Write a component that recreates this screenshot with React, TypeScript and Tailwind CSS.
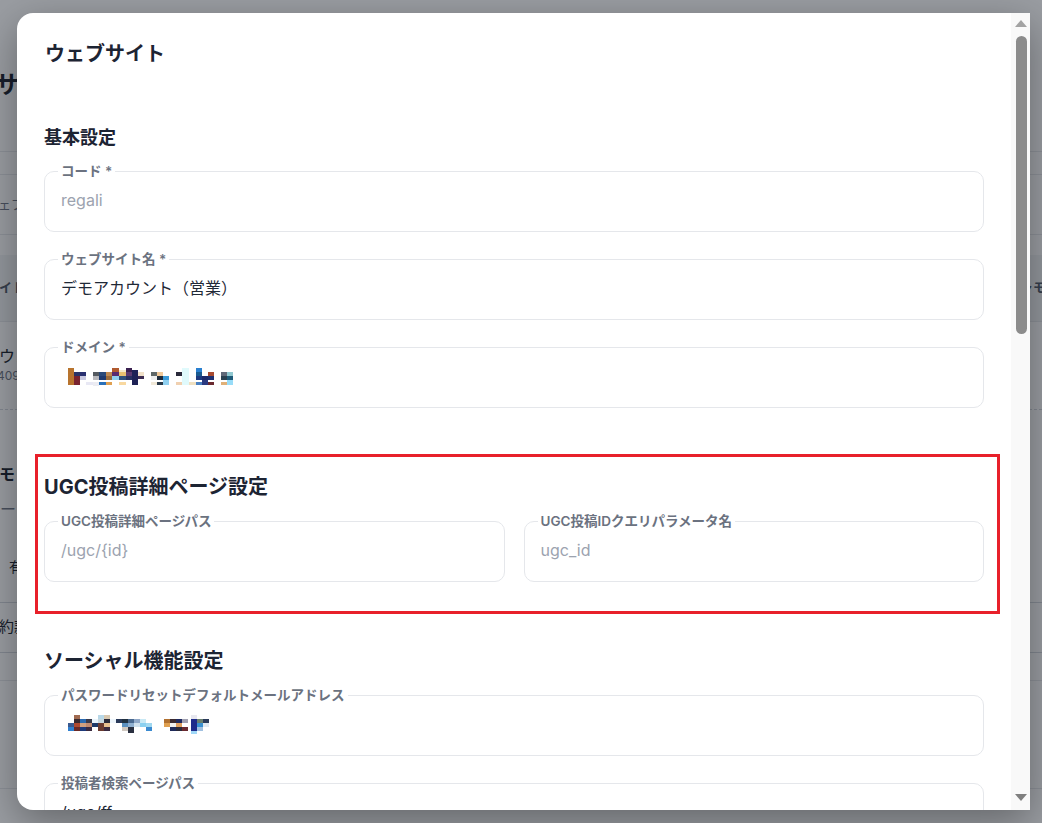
import React from "react";

type Cell = [number, number, number, number, string];

const font = "font-['Inter','Noto_Sans_CJK_JP',sans-serif]";

// blurred-out values (domain / mail address)
const domainCells: Cell[] = [
  [0, 1, 6, 17, "#b8742e"],
  [6, 5, 6, 4, "#2a3468"], [6, 9, 6, 9, "#7a2430"],
  [12, 5, 6, 4, "#283070"], [12, 9, 6, 4, "#c8c8e0"],
  [18, 15, 7, 3, "#e8e8f4"],
  [25, 5, 6, 4, "#555a60"], [25, 9, 6, 4, "#b8b8bc"], [25, 15, 6, 4, "#ececf2"],
  [31, 5, 7, 4, "#2a4a7a"], [31, 9, 7, 4, "#1e3a70"], [31, 15, 7, 3, "#2a70b8"],
  [38, 5, 6, 4, "#c08a50"], [38, 9, 6, 4, "#9a6a3a"], [38, 15, 6, 3, "#e0a050"],
  [44, 1, 7, 4, "#b05a30"], [44, 5, 7, 4, "#5a2a70"], [44, 9, 7, 4, "#90d0f0"],
  [51, 3, 7, 2, "#f4e8c8"], [51, 5, 7, 4, "#e8c070"], [51, 9, 7, 4, "#30507a"], [51, 15, 7, 3, "#f8d8a0"],
  [58, 1, 6, 4, "#3a2050"], [58, 5, 6, 4, "#5a3a70"], [58, 9, 6, 4, "#283060"],
  [64, 3, 6, 15, "#1e2256"],
  [70, 5, 6, 4, "#f0e0c8"], [70, 9, 6, 3, "#3a2a50"],
  [83, 5, 6, 4, "#606868"], [83, 9, 6, 4, "#eeeeee"], [83, 15, 6, 3, "#f0e8d8"],
  [89, 5, 6, 4, "#f0c898"], [89, 9, 6, 4, "#1e2a3a"], [89, 15, 6, 3, "#283848"],
  [95, 9, 6, 4, "#3a9ad8"], [95, 13, 6, 5, "#90d0f0"],
  [108, 5, 6, 4, "#2a2a3a"], [108, 15, 6, 3, "#f0d0b0"],
  [114, 1, 7, 17, "#e0fafc"],
  [121, 15, 7, 3, "#f0e0c0"],
  [128, 1, 6, 4, "#2a80d0"], [128, 5, 6, 4, "#1a5a90"], [128, 9, 6, 4, "#1e3a80"], [128, 15, 6, 3, "#4a80c0"],
  [134, 9, 6, 4, "#1e2a6a"], [134, 13, 6, 5, "#2a3a80"],
  [140, 5, 6, 4, "#a84a30"], [140, 9, 6, 4, "#1e3070"], [140, 15, 6, 3, "#6a2a30"],
  [153, 5, 6, 4, "#606878"], [153, 9, 6, 4, "#2a4050"], [153, 15, 6, 3, "#e0b078"],
  [159, 5, 6, 4, "#90c8d0"], [159, 9, 6, 4, "#1e5a78"], [159, 13, 6, 5, "#98dcf8"],
];

const mailCells: Cell[] = [
  [0, 8, 6, 4, "#3a5a90"], [0, 12, 6, 4, "#3080d0"],
  [6, 0, 6, 4, "#a06a50"], [6, 4, 6, 4, "#3a2a30"], [6, 8, 6, 4, "#b04a30"], [6, 12, 6, 4, "#6a2a28"],
  [12, 4, 6, 4, "#2a6ab0"], [12, 8, 6, 4, "#d0a080"], [12, 12, 6, 4, "#1e3a7a"],
  [18, 4, 6, 4, "#3a3a4a"], [18, 8, 6, 4, "#c08a70"], [18, 12, 6, 4, "#3a2a40"],
  [24, 4, 6, 4, "#e8f4fc"], [24, 8, 6, 4, "#1e3a6a"],
  [30, 0, 6, 4, "#b8d8e8"], [30, 4, 6, 4, "#c8d8e0"], [30, 8, 6, 8, "#6a3a30"],
  [36, 0, 6, 4, "#d8c8b0"], [36, 4, 6, 4, "#2a2a3a"], [36, 8, 6, 4, "#e8c090"], [36, 12, 6, 4, "#3a2a40"],
  [42, 4, 6, 4, "#eef6fc"],
  [48, 4, 6, 4, "#2a3a5a"],
  [54, 4, 6, 4, "#203040"], [54, 8, 6, 4, "#5a90c0"], [54, 12, 6, 4, "#d0c8c0"],
  [60, 4, 6, 4, "#4a6a90"], [60, 8, 6, 4, "#90b0d0"], [60, 12, 6, 6, "#2a3040"],
  [66, 4, 6, 4, "#90a8c8"], [66, 8, 6, 4, "#d0e0ec"],
  [72, 4, 6, 4, "#c8e8f4"], [72, 8, 6, 4, "#8ad0f0"],
  [78, 8, 6, 4, "#a0d8f0"], [78, 12, 6, 4, "#3a8ad0"],
  [96, 4, 6, 4, "#b07030"], [96, 8, 6, 4, "#e0a050"],
  [102, 4, 6, 4, "#3a2a30"], [102, 8, 6, 4, "#f0f0f0"], [102, 12, 6, 4, "#1e2a5a"],
  [108, 4, 6, 4, "#1e2a60"], [108, 8, 6, 4, "#e0a060"], [108, 12, 6, 4, "#2a2a3a"],
  [114, 4, 6, 4, "#a0a0b0"], [114, 12, 6, 4, "#6a2a30"],
  [123, 0, 6, 4, "#e8e8f0"], [123, 4, 6, 12, "#1e2a8a"], [123, 16, 6, 3, "#a0d8f8"],
  [129, 4, 6, 4, "#6a8070"], [129, 8, 6, 4, "#3a90d0"], [129, 12, 6, 4, "#a0c0e0"],
  [135, 4, 6, 4, "#2a3a5a"], [135, 8, 6, 4, "#e0e8f0"],
];

function Mosaic({ cells, w, h }: { cells: Cell[]; w: number; h: number }) {
  return (
    <svg width={w} height={h} viewBox={`0 0 ${w} ${h}`} className="block ml-[7px]">
      {cells.map(([x, y, cw, ch, c], i) => (
        <rect key={i} x={x} y={y} width={cw} height={ch} fill={c} />
      ))}
    </svg>
  );
}

function Field({
  label,
  children,
}: {
  label: string;
  children: React.ReactNode;
}) {
  return (
    <fieldset className="border border-[#e5e7eb] rounded-[10px] px-4 pt-[9px] pb-[19px] min-w-0">
      <legend className="px-[3px] -ml-[3px] text-[13.5px] leading-4 font-semibold text-[#6b7280]">
        {label}
      </legend>
      <div className="h-6 flex items-center text-[16px] leading-6">{children}</div>
    </fieldset>
  );
}

function SectionTitle({ children, size }: { children: React.ReactNode; size: "lg" | "xl" }) {
  return (
    <h3
      className={
        size === "lg"
          ? "text-[18px] leading-[26px] font-bold text-[#1d2433]"
          : "text-[20px] leading-7 font-bold text-[#1d2433]"
      }
    >
      {children}
    </h3>
  );
}

function BackgroundPage() {
  return (
    <div className={`h-[823px] bg-white text-[#111827] overflow-hidden ${font}`}>
      <div className="h-[152px] border-b border-gray-200 pt-[71px]">
        <div className="text-[24px] leading-7 font-bold -ml-[5px]">サイト管理</div>
      </div>
      <div className="h-[23px] border-b border-gray-200" />
      <div className="h-[60px] border-b border-gray-200 flex items-center text-[13px] text-gray-500 -ml-[2px]">
        ェブ
      </div>
      <div className="h-[20px]" />
      <div className="h-[67px] bg-gray-100 border-b border-gray-200 flex items-center justify-between text-[13px] font-bold text-gray-600">
        <span className="-ml-[1px]">イト</span>
        <span className="-mr-[4px]">ャモ</span>
      </div>
      <div className="h-[88px] border-b border-dashed border-gray-300 pt-[22px]">
        <div className="text-[16px] leading-6 -ml-[1px]">ウェブ</div>
        <div className="text-[12px] leading-4 text-gray-500 -ml-[3px]">4098</div>
      </div>
      <div className="h-[193px] border-b border-gray-300 pt-[52px]">
        <div className="text-[16px] leading-6 font-bold -ml-[1px]">モ</div>
        <div className="text-[16px] leading-6 text-gray-500 mt-[11px]">ー</div>
        <div className="text-[14px] leading-5 mt-[36px] ml-[9px]">有効</div>
      </div>
      <div className="h-[50px] border-b border-gray-300 flex items-center text-[15px] -ml-[1px]">
        約款
      </div>
      <div className="h-[28px] border-b border-gray-200" />
      <div className="h-[108px] border-b border-gray-200" />
    </div>
  );
}

function Scrollbar() {
  return (
    <div className="w-[19px] bg-[#f9f9f9] flex flex-col items-center">
      <svg width="12" height="8" viewBox="0 0 12 8" className="mt-[7px]">
        <path d="M6 0 L12 7 L0 7 Z" fill="#a3a3a3" />
      </svg>
      <div className="mt-[8px] ml-[2px] w-[11px] h-[298px] rounded-full bg-[#8c8c8c]" />
      <div className="flex-1" />
      <svg width="12" height="8" viewBox="0 0 12 8" className="mb-[8px]">
        <path d="M0 0 L12 0 L6 7 Z" fill="#7f7f7f" />
      </svg>
    </div>
  );
}

export default function App() {
  return (
    <div className="relative w-[1042px] h-[823px] overflow-hidden">
      <BackgroundPage />
      <div className="absolute inset-0 bg-[#1f2530]/45" />

      <div
        className={`absolute left-[17px] top-[13px] w-[1013px] h-[797px] bg-white rounded-l-2xl overflow-hidden flex shadow-[0_12px_40px_rgba(0,0,0,0.35)] ${font}`}
      >
        <div className="flex-1 overflow-hidden px-[27px] pt-[27px]">
          <h2 className="text-[20px] leading-7 font-bold text-[#1d2433] ml-px">ウェブサイト</h2>

          <section className="mt-[57px]">
            <SectionTitle size="lg">基本設定</SectionTitle>
            <div className="mt-3 flex flex-col gap-[19px]">
              <Field label="コード *">
                <span className="text-[#9ca3af]">regali</span>
              </Field>
              <Field label="ウェブサイト名 *">
                <span className="text-[#1f2937]">デモアカウント（営業）</span>
              </Field>
              <Field label="ドメイン *">
                <Mosaic cells={domainCells} w={170} h={19} />
              </Field>
            </div>
          </section>

          <section className="relative mt-[65px]">
            <div className="absolute -left-[9px] -right-[16px] -top-[19px] -bottom-[32px] border-[3px] border-[#e8202a] pointer-events-none" />
            <SectionTitle size="xl">UGC投稿詳細ページ設定</SectionTitle>
            <div className="mt-3 grid grid-cols-2 gap-[19px]">
              <Field label="UGC投稿詳細ページパス">
                <span className="text-[#9ca3af]">/ugc/{"{id}"}</span>
              </Field>
              <Field label="UGC投稿IDクエリパラメータ名">
                <span className="text-[#9ca3af]">ugc_id</span>
              </Field>
            </div>
          </section>

          <section className="mt-[65px]">
            <SectionTitle size="xl">ソーシャル機能設定</SectionTitle>
            <div className="mt-3 flex flex-col gap-[19px]">
              <Field label="パスワードリセットデフォルトメールアドレス">
                <Mosaic cells={mailCells} w={142} h={19} />
              </Field>
              <Field label="投稿者検索ページパス">
                <span className="text-[#1f2937]">/ugc/ff</span>
              </Field>
            </div>
          </section>
        </div>
        <Scrollbar />
      </div>
    </div>
  );
}
